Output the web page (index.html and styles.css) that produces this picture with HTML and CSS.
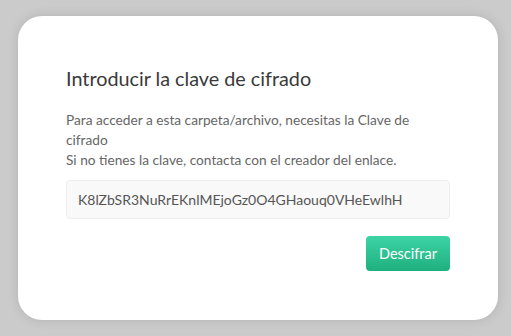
FILE: index.html
```html
<!DOCTYPE html>
<html lang="es">
<head>
    <meta charset="UTF-8">
    <meta name="viewport" content="width=device-width, initial-scale=1.0">
    <title>Clave de cifrado</title>
    <link rel="stylesheet" href="styles.css">
</head>
<body>
    <div class="dialog">
        <h2 class="title">Introducir la clave de cifrado</h2>
        <p class="info">
            Para acceder a esta carpeta/archivo, necesitas la Clave de cifrado<br>
            Si no tienes la clave, contacta con el creador del enlace.
        </p>
        <input class="key" type="text" value="K8lZbSR3NuRrEKnlMEjoGz0O4GHaouq0VHeEwlhH">
        <div class="actions">
            <button class="btn">Descifrar</button>
        </div>
    </div>
</body>
</html>
```
FILE: styles.css
```css
body {
    margin: 0;
    padding: 16px 13px 16px 18px;
    background-color: #cbcbcb;
    font-family: Lato, "Open Sans", sans-serif;
}
.dialog {
    width: 384px;
    padding: 48px 48px 49px;
    background: white;
    border-radius: 24px;
    box-shadow: 0 0 12px rgba(0,0,0,0.12);
}
.title {
    margin: 0;
    font-size: 19.8px;
    font-weight: normal;
    line-height: 24px;
    color: #3a3a3a;
    padding-top: 2px;
}
.info {
    margin: 20px 0 0;
    font-size: 13.7px;
    line-height: 20px;
    color: #666;
}
.key {
    display: block;
    box-sizing: border-box;
    width: 384px;
    height: 39px;
    margin-top: 10px;
    padding: 0 11px;
    border: 1px solid #eee;
    border-radius: 4px;
    background: #f9f9f9;
    font-family: inherit;
    font-size: 14px;
    color: #555;
}
.actions {
    display: flex;
    justify-content: flex-end;
    margin-top: 17px;
}
.btn {
    width: 84px;
    height: 35px;
    border: none;
    border-radius: 4px;
    background: linear-gradient(#3dd4a5, #1faf7e);
    color: white;
    font-family: inherit;
    font-size: 14.5px;
}
```
